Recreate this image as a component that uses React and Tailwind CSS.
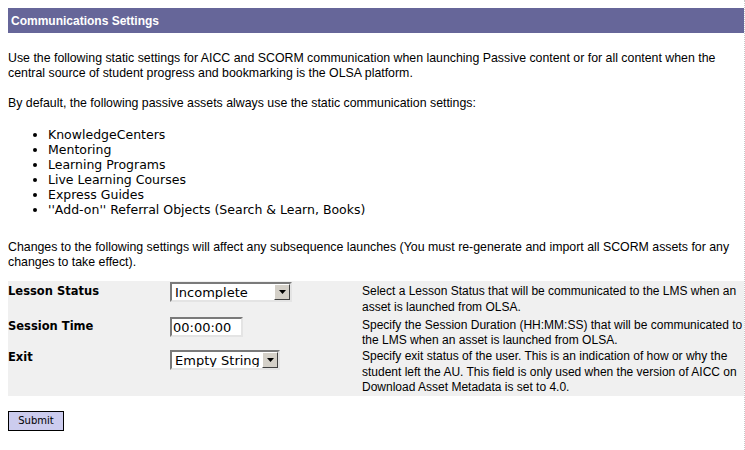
import React from "react";

const arial = "font-['Liberation_Sans',Arial,sans-serif]";
const verdana = "font-['DejaVu_Sans',Verdana,sans-serif]";

function SelectBox({ value, width }) {
  return (
    <div
      className={`flex items-center h-[20px] bg-white border-2 border-t-[#7a7a7a] border-l-[#7a7a7a] border-r-[#e4e4e4] border-b-[#e4e4e4] ${width}`}
    >
      <span className={`flex-1 pl-[3px] text-[13px] leading-none text-black whitespace-nowrap overflow-hidden ${verdana}`}>
        {value}
      </span>
      <span className="w-[16px] h-[16px] bg-[#d4d0c8] border border-t-white border-l-white border-r-[#404040] border-b-[#404040] flex items-center justify-center">
        <svg width="7" height="4" viewBox="0 0 7 4">
          <polygon points="0,0 7,0 3.5,4" fill="black" />
        </svg>
      </span>
    </div>
  );
}

export default function App() {
  return (
    <div className="w-[745px] h-[450px] bg-white relative overflow-hidden">
      <div className="absolute right-0 top-0 bottom-0 border-r border-dotted border-[#c8c8c8]" />
      <div className="pl-[8px] pr-[1px] pt-[8px]">
        <div className={`h-[25px] bg-[#666699] flex items-center pl-[3px] text-white font-bold text-[12px] ${arial}`}>
          Communications Settings
        </div>
        <p className={`mt-[18px] pr-[20px] text-[12.35px] leading-[15px] text-black ${arial}`}>
          Use the following static settings for AICC and SCORM communication when launching Passive content or for all content when the central source of student progress and bookmarking is the OLSA platform.
        </p>
        <p className={`mt-[15px] text-[12.35px] leading-[15px] text-black ${arial}`}>
          By default, the following passive assets always use the static communication settings:
        </p>
        <ul className={`mt-[16px] pl-[40px] list-disc text-[12.5px] leading-[15px] text-black ${verdana}`}>
          <li>KnowledgeCenters</li>
          <li>Mentoring</li>
          <li>Learning Programs</li>
          <li>Live Learning Courses</li>
          <li>Express Guides</li>
          <li>''Add-on'' Referral Objects (Search &amp; Learn, Books)</li>
        </ul>
        <p className={`mt-[23px] text-[12.35px] leading-[15px] text-black ${arial}`}>
          Changes to the following settings will affect any subsequence launches (You must re-generate and import all SCORM assets for any changes to take effect).
        </p>
        <div className="mt-[11px] bg-[#f0f0f0] grid grid-cols-[162px_192px_1fr]">
          <div className={`pt-[2px] text-[11.5px] font-bold leading-[16px] ${verdana}`}>Lesson Status</div>
          <div className="pt-[1px]">
            <SelectBox value="Incomplete" width="w-[122px]" />
          </div>
          <div className={`pt-[2px] text-[12px] leading-[16px] ${arial}`}>
            Select a Lesson Status that will be communicated to the LMS when an asset is launched from OLSA.
          </div>

          <div className={`pt-[3px] text-[11.5px] font-bold leading-[16px] ${verdana}`}>Session Time</div>
          <div className="pt-[2px]">
            <div className={`w-[73px] h-[20px] bg-white border-2 border-t-[#7a7a7a] border-l-[#7a7a7a] border-r-[#e4e4e4] border-b-[#e4e4e4] flex items-center pl-[1px] text-[13px] leading-none ${verdana}`}>
              00:00:00
            </div>
          </div>
          <div className={`pt-[3px] text-[12px] leading-[15px] ${arial}`}>
            Specify the Session Duration (HH:MM:SS) that will be communicated to the LMS when an asset is launched from OLSA.
          </div>

          <div className={`pt-[1px] text-[11.5px] font-bold leading-[16px] ${verdana}`}>Exit</div>
          <div className="pt-[2px]">
            <SelectBox value="Empty String" width="w-[110px]" />
          </div>
          <div className={`pt-[1px] text-[12px] leading-[15.5px] ${arial}`}>
            Specify exit status of the user. This is an indication of how or why the student left the AU. This field is only used when the version of AICC on Download Asset Metadata is set to 4.0.
          </div>
        </div>
        <button className={`mt-[15px] w-[56px] h-[20px] bg-[#ccccee] border border-black text-[10px] leading-none text-black ${verdana}`}>
          Submit
        </button>
      </div>
    </div>
  );
}
